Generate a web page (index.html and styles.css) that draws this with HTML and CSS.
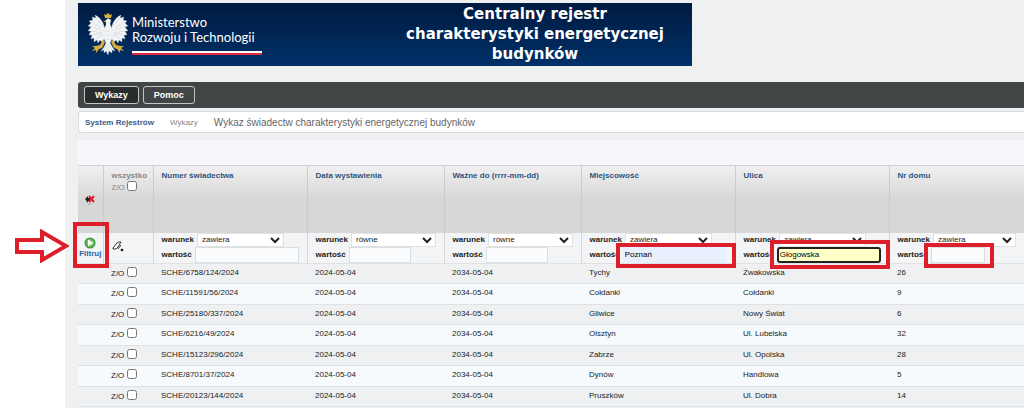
FILE: index.html
```
<!DOCTYPE html>
<html lang="pl">
<head>
  <meta charset="UTF-8" />
  <title>Wykaz świadectw charakterystyki energetycznej budynków</title>
  <link rel="stylesheet" href="styles.css">
</head>
<body>
  <div class="app">
    <header class="banner">
      <div class="logo">
        <svg class="eagle" viewBox="0 0 40 42" aria-hidden="true">
          <g fill="#f3f4f6" stroke="#c3c8d1" stroke-width=".3">
            <path d="M17 16 L15 10 Q12 4 7 2 L8 5 L4 4 L5 7 L1 8 L3 10 L0 13 L3 14 L0 18 L3 18 L1 22 L4 22 L3 26 L6 25 L6 29 L9 27 L10 30 L12 27 L14 29 L17 25Z"/>
            <path d="M23 16 L25 10 Q28 4 33 2 L32 5 L36 4 L35 7 L39 8 L37 10 L40 13 L37 14 L40 18 L37 18 L39 22 L36 22 L37 26 L34 25 L34 29 L31 27 L30 30 L28 27 L26 29 L23 25Z"/>
            <path d="M18 7 Q20 4 23 7 L22 11 L24 16 L24 26 L22 30 L25 35 L27 38 L24 37 L24 40 L21 38 L20 42 L18 38 L16 40 L16 37 L13 38 L16 34 L18 30 L16 26 L16 16 L18 12Z"/>
          </g>
          <g fill="none" stroke="#b4bac6" stroke-width=".4">
            <path d="M4 9l9 6M3 13l11 5M3 18l11 2M5 22l9-1M8 26l6-4M8 5l7 9"/>
            <path d="M36 9l-9 6M37 13l-11 5M37 18l-11 2M35 22l-9-1M32 26l-6-4M32 5l-7 9"/>
            <path d="M18 17l2 2 2-2M18 21l2 2 2-2M18 25l2 2 2-2M20 31v9M18 33l-2 4M22 33l2 4"/>
          </g>
          <g fill="#dcae3c">
            <path d="M17 5 L16 1 L18 2 L20 0 L22 2 L24 1 L23 5Z"/>
            <path d="M18 7 L15 9 L18 9Z"/>
            <path d="M15 27 L12 32 L8 33 L4 33 L7 35 L4 38 L8 37 L8 40 L11 36 L14 35 L17 29Z"/>
            <path d="M25 27 L28 32 L32 33 L36 33 L33 35 L36 38 L32 37 L32 40 L29 36 L26 35 L23 29Z"/>
          </g>
        </svg>
        <div class="ministry">Ministerstwo<br>Rozwoju i Technologii</div>
      </div>
      <h1>Centralny rejestr charakterystyki energetycznej budynków</h1>
    </header>

    <nav class="menu">
      <button class="active">Wykazy</button>
      <button>Pomoc</button>
    </nav>

    <div class="breadcrumb">
      <a href="#">System Rejestrów</a>
      <span>Wykazy</span>
      <h2>Wykaz świadectw charakterystyki energetycznej budynków</h2>
    </div>

    <div class="toolbar"></div>

    <table>
      <colgroup>
        <col class="c-tool"><col class="c-check"><col class="c-wide"><col class="c-date"><col class="c-date"><col class="c-wide"><col class="c-wide"><col>
      </colgroup>
      <thead>
        <tr class="head">
          <th class="center">
            <svg class="pin" viewBox="0 0 10 12" aria-hidden="true">
              <path d="M0 5L3 2V4H6V7H3V9Z" fill="#222"/>
              <path d="M4 2L9 8M9 2L4 8" stroke="#d8202c" stroke-width="2" fill="none"/>
              <path d="M3 10q2 2 3-1" stroke="#aaa" fill="none"/>
            </svg>
          </th>
          <th class="all"><label for="all">wszystko<br><span>Z/O</span></label> <input type="checkbox" id="all"></th>
          <th>Numer świadectwa</th>
          <th>Data wystawienia</th>
          <th>Ważne do (rrrr-mm-dd)</th>
          <th>Miejscowość</th>
          <th>Ulica</th>
          <th>Nr domu</th>
        </tr>
        <tr class="filters">
          <td class="center">
            <div class="run">
              <button class="filter-btn">
                <svg viewBox="0 0 12 12" aria-hidden="true">
                  <circle cx="6" cy="6" r="5.5" fill="#3f9a38"/>
                  <circle cx="6" cy="6" r="4" fill="#6fbf5f"/>
                  <path d="M4 2.5L9.5 6L4 9.5Z" fill="#fff"/>
                </svg>
                Filtruj
              </button>
              <span class="mark mark-run"></span>
              <svg class="arrow" viewBox="0 0 54 34" aria-hidden="true">
                <path d="M2 11H27V3L51 17L27 31V23H2Z" fill="#fff" stroke="#dc1f2b" stroke-width="4"/>
              </svg>
            </div>
          </td>
          <td>
            <button class="clear" aria-label="Wyczyść">
              <svg viewBox="0 0 12 11" aria-hidden="true">
                <path d="M1 7L5 2Q6 1 8 1H9L6 6Q5 8 3 8H1Z" fill="#fff" stroke="#333"/>
                <path d="M6 8L9 4" stroke="#333"/>
                <circle cx="10" cy="9" r="1.3" fill="#111"/>
              </svg>
            </button>
          </td>
          <td>
            <div class="cond"><label for="w1">warunek</label><select id="w1"><option>zawiera</option></select></div>
            <div class="cond"><label for="v1">wartość</label><div class="field"><input type="text" id="v1"></div></div>
          </td>
          <td>
            <div class="cond"><label for="w2">warunek</label><select id="w2"><option>równe</option></select></div>
            <div class="cond"><label for="v2">wartość</label><div class="field short"><input type="text" id="v2"></div></div>
          </td>
          <td>
            <div class="cond"><label for="w3">warunek</label><select id="w3"><option>równe</option></select></div>
            <div class="cond"><label for="v3">wartość</label><div class="field short"><input type="text" id="v3"></div></div>
          </td>
          <td>
            <div class="cond"><label for="w4">warunek</label><select id="w4"><option>zawiera</option></select></div>
            <div class="cond"><label for="v4">wartość</label><div class="field"><input type="text" id="v4" class="filled" value="Poznań"><span class="mark"></span></div></div>
          </td>
          <td>
            <div class="cond"><label for="w5">warunek</label><select id="w5"><option>zawiera</option></select></div>
            <div class="cond"><label for="v5">wartość</label><div class="field"><input type="text" id="v5" class="current" value="Głogowska" autofocus><span class="mark mark-current"></span></div></div>
          </td>
          <td>
            <div class="cond"><label for="w6">warunek</label><select id="w6"><option>zawiera</option></select></div>
            <div class="cond"><label for="v6">wartość</label><div class="field narrow"><input type="text" id="v6"><span class="mark"></span></div></div>
          </td>
        </tr>
      </thead>
      <tbody>
        <tr><td></td><td><label>Z/O <input type="checkbox"></label></td><td>SCHE/6758/124/2024</td><td>2024-05-04</td><td>2034-05-04</td><td>Tychy</td><td>Żwakowska</td><td>26</td></tr>
        <tr><td></td><td><label>Z/O <input type="checkbox"></label></td><td>SCHE/11591/56/2024</td><td>2024-05-04</td><td>2034-05-04</td><td>Cołdanki</td><td>Cołdanki</td><td>9</td></tr>
        <tr><td></td><td><label>Z/O <input type="checkbox"></label></td><td>SCHE/25180/337/2024</td><td>2024-05-04</td><td>2034-05-04</td><td>Gliwice</td><td>Nowy Świat</td><td>6</td></tr>
        <tr><td></td><td><label>Z/O <input type="checkbox"></label></td><td>SCHE/6216/49/2024</td><td>2024-05-04</td><td>2034-05-04</td><td>Olsztyn</td><td>Ul. Lubelska</td><td>32</td></tr>
        <tr><td></td><td><label>Z/O <input type="checkbox"></label></td><td>SCHE/15123/296/2024</td><td>2024-05-04</td><td>2034-05-04</td><td>Zabrze</td><td>Ul. Opolska</td><td>28</td></tr>
        <tr><td></td><td><label>Z/O <input type="checkbox"></label></td><td>SCHE/8701/37/2024</td><td>2024-05-04</td><td>2034-05-04</td><td>Dynów</td><td>Handlowa</td><td>5</td></tr>
        <tr><td></td><td><label>Z/O <input type="checkbox"></label></td><td>SCHE/20123/144/2024</td><td>2024-05-04</td><td>2034-05-04</td><td>Pruszków</td><td>Ul. Dobra</td><td>14</td></tr>
      </tbody>
    </table>
  </div>
</body>
</html>
```
FILE: styles.css
```
* {
  box-sizing: border-box;
}
body {
  margin: 0;
  background: #fff;
  font-family: "Liberation Sans", Arial, sans-serif;
  font-size: 8px;
  color: #222;
}
.app {
  min-height: 100vh;
  margin-left: 65px;
  padding: 3px 0 0 13px;
  background: #eef0f2;
}
.banner {
  display: flex;
  justify-content: space-between;
  max-width: 614px;
  min-height: 63px;
  background: linear-gradient(#001a40, #003169);
  color: #fff;
}
.logo {
  display: flex;
  gap: 4px;
  padding: 10px;
}
.eagle {
  width: 40px;
  height: 42px;
}
.ministry {
  align-self: flex-start;
  padding: 2px 7px 8px 0;
  font-family: Lato, sans-serif;
  font-size: 13px;
  line-height: 15px;
  border-bottom: 2px solid #dc2a40;
  box-shadow: inset 0 -2px #fff;
}
.banner h1 {
  width: 314px;
  margin: 0;
  padding: 1px 24px;
  font-family: "DejaVu Sans", Verdana, sans-serif;
  font-size: 15px;
  line-height: 20px;
  text-align: center;
}
.menu {
  display: flex;
  gap: 4px;
  margin-top: 16px;
  padding: 4px 6px;
  background: #414545;
  border-radius: 3px 0 0 3px;
}
.menu button {
  height: 18px;
  padding: 0 10px;
  background: #414545;
  border: 1px solid #c4c6c6;
  border-radius: 3px;
  color: #fff;
  font: bold 9px "Liberation Sans", Arial, sans-serif;
}
.menu .active {
  background: #292c2c;
}
.breadcrumb {
  display: flex;
  align-items: center;
  gap: 16px;
  height: 22px;
  margin-top: 3px;
  padding: 0 6px;
  background: #fff;
  border: 1px solid #d9dcde;
  border-right: none;
  border-radius: 3px 0 0 3px;
  color: #888;
}
.breadcrumb a {
  color: #3b5b8c;
  font-weight: bold;
  text-decoration: none;
}
.breadcrumb h2 {
  margin: 0;
  color: #666;
  font-size: 10px;
  font-weight: normal;
}
.toolbar {
  height: 25px;
  margin-top: 7px;
  background: #f5f7fb;
}
table {
  width: 100%;
  table-layout: fixed;
  border-collapse: collapse;
}
.c-tool {
  width: 25px;
}
.c-check {
  width: 50px;
}
.c-wide {
  width: 154px;
}
.c-date {
  width: 137px;
}
th, td {
  padding: 0 8px;
  text-align: left;
  white-space: nowrap;
}
.center {
  padding: 0;
  text-align: center;
}
.head {
  height: 67px;
  background: linear-gradient(#f0f0f1, #d7d7d7 50%, #d7d7d7);
}
.head th {
  padding-top: 4px;
  border-top: 1px solid #d2d4d6;
  border-right: 1px solid #c9cbcd;
  color: #30547e;
  line-height: 11px;
  vertical-align: top;
}
.head th:last-child, .filters td:last-child {
  border-right: none;
}
.head .center {
  vertical-align: middle;
}
.head .all {
  color: #888;
}
.all span {
  font-weight: normal;
}
.pin {
  width: 10px;
  height: 12px;
}
input[type="checkbox"] {
  width: 10px;
  height: 10px;
  margin: 0;
  vertical-align: -1px;
}
.filters {
  height: 30px;
  background: #f3f4f5;
}
.filters td {
  border-right: 1px solid #d5d7d9;
}
.run {
  position: relative;
}
.filter-btn, .clear {
  padding: 0;
  background: none;
  border: none;
}
.filter-btn {
  color: #2a62a8;
  font: bold 8px "Liberation Sans", Arial, sans-serif;
}
.filter-btn svg {
  display: block;
  width: 12px;
  height: 12px;
  margin: 0 auto;
}
.clear svg {
  display: block;
  width: 12px;
  height: 11px;
}
.cond {
  display: flex;
  gap: 3px;
  align-items: center;
}
.cond label {
  font-weight: bold;
}
.cond select {
  width: 87px;
  height: 14px;
  padding: 0;
  background-color: #fff;
  border: 1px solid #dfe1e3;
  color: #222;
  font: 8px "Liberation Sans", Arial, sans-serif;
}
.field {
  position: relative;
  width: 104px;
}
.short {
  width: 62px;
}
.narrow {
  width: 54px;
}
.field input {
  display: block;
  width: 100%;
  height: 16px;
  padding: 0 1px;
  background: #fafcfd;
  border: 1px solid #dcdfe1;
  font: 8px "Liberation Sans", Arial, sans-serif;
}
.field .filled {
  background: #e8effd;
  border-color: #e8effd;
}
.field .current {
  background: #ffffc8;
  border: 2px solid #222;
  border-radius: 3px;
  outline: none;
}
/* red frames over the fields to fill in */
.mark {
  position: absolute;
  inset: -4px -9px -5px -7px;
  border: 4px solid #dc1f2b;
  pointer-events: none;
}
.mark-current {
  inset: -7px -9px -6px -7px;
}
.mark-run {
  inset: -15px -6px -10px -5px;
}
.arrow {
  position: absolute;
  top: -8px;
  right: 34px;
  width: 54px;
  height: 34px;
}
tbody tr {
  height: 20px;
  background: #eff0f1;
  border-bottom: 1px solid #dfe2e4;
}
tbody tr:first-child {
  border-top: 1px solid #dfe2e4;
}
tbody tr:nth-child(even) {
  height: 21px;
  background: #f7fafd;
}
tbody td {
  padding-bottom: 2px;
}
```
